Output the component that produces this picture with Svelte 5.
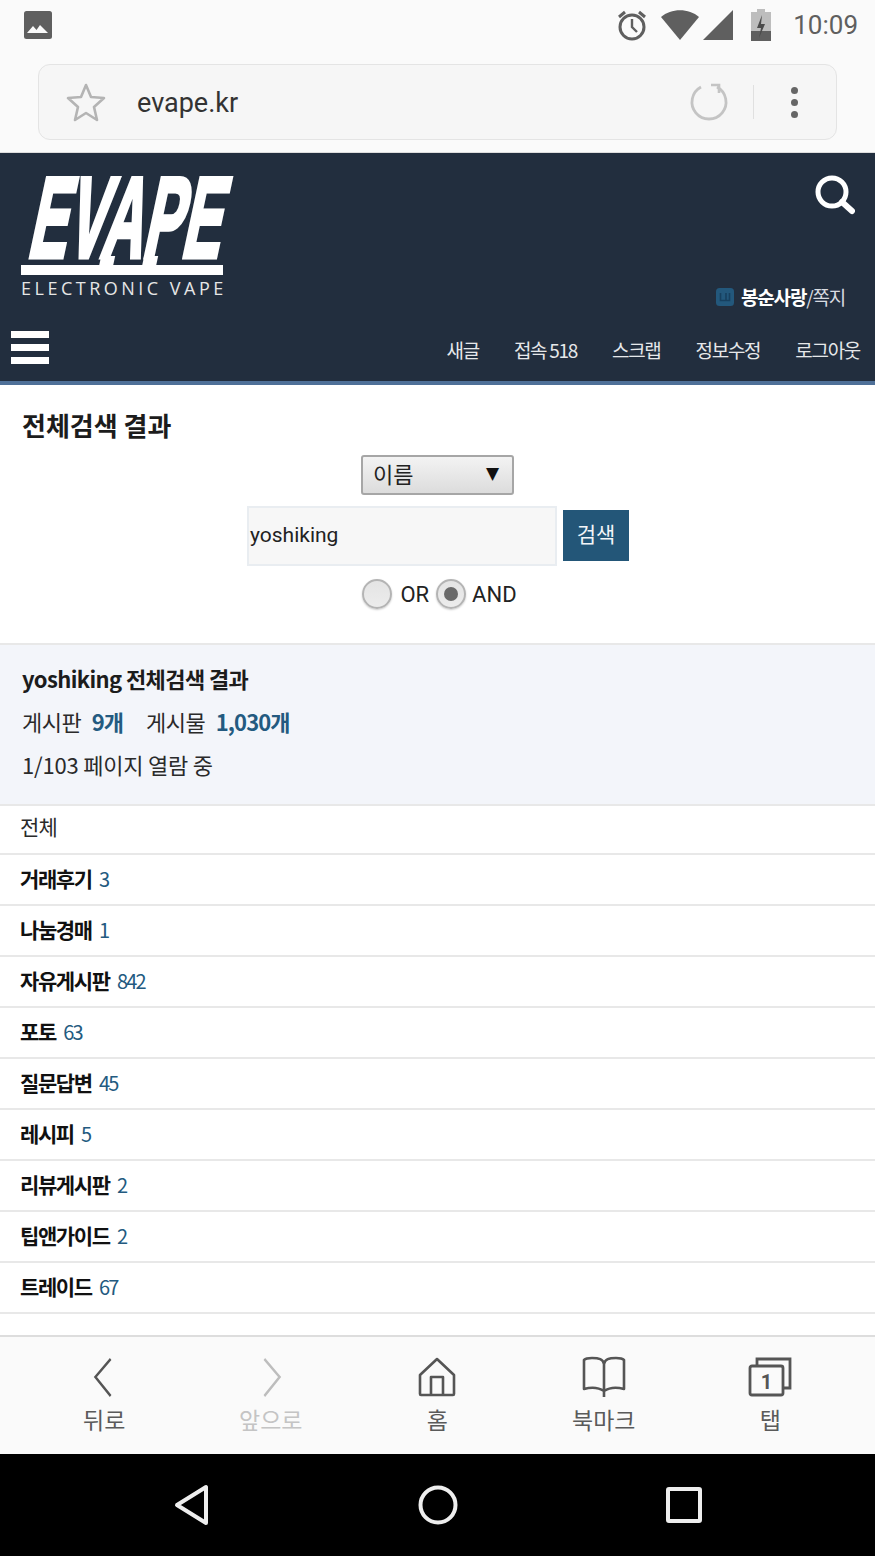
<script>
  const boards = [
    ['거래후기', 3], ['나눔경매', 1], ['자유게시판', 842], ['포토', 63], ['질문답변', 45],
    ['레시피', 5], ['리뷰게시판', 2], ['팁앤가이드', 2], ['트레이드', 67]
  ];
  const topLinks = ['새글', '접속 518', '스크랩', '정보수정', '로그아웃'];
</script>

<div class="phone">
  <div class="status">
    <svg class="pic" viewBox="0 0 28 28"><rect width="28" height="28" rx="2.5" fill="#5f5f5f"/><path d="M3 22l6-7 3.5 4 3.5-5 8 8z" fill="#fafafa"/></svg>
    <div class="status-right">
      <svg class="alarm" viewBox="0 0 32 32" fill="none" stroke="#5f5f5f"><circle cx="16" cy="18" r="12" stroke-width="3"/><path d="M16 10v8l5 5" stroke-width="2.4"/><path d="M3 8l6-5M29 8l-6-5" stroke-width="3"/></svg>
      <svg class="wifi" viewBox="0 0 38 30"><path d="M0 7C10-2 28-2 38 7L19 30z" fill="#5f5f5f"/></svg>
      <svg class="signal" viewBox="0 0 32 32"><path d="M0 32L32 0v32z" fill="#5f5f5f"/></svg>
      <svg class="battery" viewBox="0 0 20 32"><path d="M6 0h8v3h6v29H0V3h6z" fill="#bdbdbd"/><path d="M0 22h20v10H0z" fill="#5f5f5f"/><path d="M11 6l-5 13h4l-2 10 6-14h-4z" fill="#4b4b4b"/></svg>
      <span class="time">10:09</span>
    </div>
  </div>

  <div class="urlwrap">
    <div class="urlbar">
      <svg class="star" viewBox="0 0 40 40" fill="none" stroke="#b4b4b4" stroke-width="2.6" stroke-linejoin="round"><path d="M20 3l5 12 13 1-10 9 3 13-11-7-11 7 3-13L2 16l13-1z"/></svg>
      <span class="url">evape.kr</span>
      <svg class="reload" viewBox="0 0 40 40" fill="none" stroke="#c4c4c4" stroke-width="2.8"><path d="M12 5a17 17 0 1 0 16 0"/><path d="M22 3h8v8" stroke-width="2.6"/></svg>
      <span class="sep"></span>
      <span class="dots"><i></i><i></i><i></i></span>
    </div>
  </div>

  <header class="head">
    <div class="head-top">
      <div class="logo">
        <span class="evape">EVAPE</span>
        <span class="leg leg1"></span>
        <span class="leg leg2"></span>
        <span class="logobar"></span>
        <span class="sub">ELECTRONIC VAPE</span>
      </div>
      <svg class="search" viewBox="0 0 40 40" fill="none" stroke="#fff"><circle cx="17" cy="17" r="14" stroke-width="5"/><path d="M27 27l10 9" stroke-width="6" stroke-linecap="round"/></svg>
    </div>
    <div class="user">
      <svg class="lv" viewBox="0 0 18 18"><rect width="18" height="18" rx="3.5" fill="#23587c"/><path d="M4.5 5v7.5h9V5M10 5v7" fill="none" stroke="#17405f" stroke-width="1.6"/></svg>
      <b>봉순사랑</b><span>/쪽지</span>
    </div>
    <div class="head-nav">
      <span class="burger"><i></i><i></i><i></i></span>
      <nav>
        {#each topLinks as l}<span>{l}</span>{/each}
      </nav>
    </div>
  </header>

  <main class="content">
    <section class="form">
      <h1>전체검색 결과</h1>
      <div class="select"><span>이름</span><em>▼</em></div>
      <div class="input-row">
        <div class="input">yoshiking</div>
        <div class="btn">검색</div>
      </div>
      <div class="radios">
        <span class="radio"></span><span class="lab">OR</span>
        <span class="radio on"><i></i></span><span class="lab and">AND</span>
      </div>
    </section>

    <section class="summary">
      <h2>yoshiking 전체검색 결과</h2>
      <p class="counts">게시판 <b>9개</b><span class="gap"></span>게시물 <b>1,030개</b></p>
      <p class="pages">1/103 페이지 열람 중</p>
    </section>

    <ul class="list">
      <li class="all">전체</li>
      {#each boards as [name, n]}
        <li><b>{name}</b> <span>{n}</span></li>
      {/each}
    </ul>
  </main>

  <div class="bottom">
    <div class="tab">
      <svg viewBox="0 0 40 40" fill="none" stroke="#555" stroke-width="2.6"><path d="M29 2L11 20l18 19" transform="translate(2 0) scale(.85 1)"/></svg>
      <span>뒤로</span>
    </div>
    <div class="tab off">
      <svg viewBox="0 0 40 40" fill="none" stroke="#bdbdbd" stroke-width="2.6"><path d="M11 2l18 18-18 19" transform="translate(4 0) scale(.85 1)"/></svg>
      <span>앞으로</span>
    </div>
    <div class="tab">
      <svg viewBox="0 0 40 40" fill="none" stroke="#555" stroke-width="2.6" stroke-linejoin="round"><path d="M20 2L3 18v19a1 1 0 0 0 1 1h32a1 1 0 0 0 1-1V18zM14 38V20h12v18"/></svg>
      <span>홈</span>
    </div>
    <div class="tab">
      <svg class="wide" viewBox="0 0 44 40" fill="none" stroke="#555" stroke-width="2.6" stroke-linejoin="round"><path d="M22 7C21 2 17 1 10 1 6 1 3 2 2 3v29c7-2 14-2 20 2 6-4 13-4 20-2V3c-1-1-4-2-8-2-7 0-11 1-12 6zM22 7v33"/></svg>
      <span>북마크</span>
    </div>
    <div class="tab">
      <svg class="wide" viewBox="0 0 44 40" fill="none" stroke="#555" stroke-width="2.8"><path d="M9 8V2h33v29h-7"/><rect x="2" y="9" width="33" height="29" rx="2"/><text x="18.5" y="32" text-anchor="middle" class="one">1</text></svg>
      <span>탭</span>
    </div>
  </div>

  <div class="android">
    <svg class="n1" viewBox="0 0 36 42" fill="none" stroke="#eee" stroke-width="4" stroke-linejoin="round"><path d="M32 3v36L3 21z"/></svg>
    <svg class="n2" viewBox="0 0 40 40" fill="none" stroke="#eee" stroke-width="4"><circle cx="20" cy="20" r="17.5"/></svg>
    <svg class="n3" viewBox="0 0 36 36" fill="none" stroke="#eee" stroke-width="4" stroke-linejoin="round"><rect x="2" y="2" width="32" height="32" rx="1"/></svg>
  </div>
</div>

<style>
  :global(body) { margin: 0; background: #fff; }
  .phone {
    width: 875px; height: 1556px; display: flex; flex-direction: column; overflow: hidden;
    font-family: "Noto Sans CJK KR", "Noto Sans", sans-serif; color: #222;
  }
  .status { height: 52px; background: #fafafa; display: flex; justify-content: space-between; align-items: center; padding: 0 17px 0 24px; box-sizing: border-box; flex: none; }
  .pic { width: 28px; height: 28px; margin-top: -2px; }
  .status-right { display: flex; align-items: center; margin-top: -2px; }
  .alarm { width: 32px; height: 32px; margin-right: 13px; }
  .wifi { width: 38px; height: 30px; margin-right: 4px; margin-top: 0; }
  .signal { width: 30px; height: 30px; margin-right: 18px; }
  .battery { width: 20px; height: 32px; margin-right: 22px; }
  .time { font: 400 26px Roboto, sans-serif; color: #5f5f5f; }

  .urlwrap { height: 101px; background: #fafafa; padding: 12px 38px 12px; box-sizing: border-box; flex: none; border-bottom: 1px solid #ddd; }
  .urlbar { height: 76px; box-sizing: border-box; background: #f6f6f6; border: 1px solid #e4e4e4; border-radius: 12px; display: flex; align-items: center; padding: 0 38px 0 27px; }
  .star { width: 40px; height: 40px; flex: none; }
  .url { font: 400 27px Roboto, sans-serif; color: #333; margin-left: 31px; flex: 1; padding-top: 2px; }
  .reload { width: 40px; height: 40px; flex: none; margin-right: 24px; }
  .sep { width: 1px; height: 34px; background: #e0e0e0; margin-right: 37px; }
  .dots { display: flex; flex-direction: column; gap: 5px; }
  .dots i { width: 7px; height: 7px; border-radius: 50%; background: #666; }

  .head { background: #222e3e; height: 232px; box-sizing: border-box; border-bottom: 4px solid #4f7098; flex: none; padding-top: 23px; position: relative; }
  .head-top { display: flex; justify-content: space-between; padding: 0 20px 0 21px; align-items: flex-start; }
  .logo { width: 212px; position: relative; height: 122px; }
  .evape {
    position: absolute; left: 28px; top: -26px; transform-origin: left top; transform: skewX(-12deg) scale(.69, 1.36);
    font: 700 84px/100px "Liberation Sans", sans-serif; color: #fff; letter-spacing: 0; -webkit-text-stroke: 3.5px #fff; white-space: nowrap;
  }
  .leg { position: absolute; top: 80px; height: 11px; background: #fff; transform: skewX(-12deg); }
  .leg1 { left: 79px; width: 14px; }
  .leg2 { left: 122px; width: 14px; }
  .logobar { position: absolute; left: 0; top: 89px; width: 202px; height: 10px; background: #fff; }
  .sub { position: absolute; left: 0; top: 101px; font: 400 18px/22px "Open Sans", sans-serif; color: #e6e6e6; letter-spacing: 3.5px; white-space: nowrap; }
  .search { width: 40px; height: 40px; margin-top: -1px; }
  .user { display: flex; align-items: center; justify-content: flex-end; margin-top: -15px; padding-right: 30px; font-size: 19px; letter-spacing: -1.2px; color: #d8dbe0; line-height: 28px; }
  .lv { width: 18px; height: 18px; margin-right: 7px; }
  .user b { color: #fff; font-weight: 700; }
  .head-nav { display: flex; align-items: center; justify-content: space-between; padding: 0 15px 0 11px; margin-top: 18px; }
  .burger { display: flex; flex-direction: column; gap: 6px; }
  .burger i { display: block; width: 38px; height: 7px; background: #fff; }
  nav { display: flex; gap: 35px; font-size: 19px; letter-spacing: -1.3px; color: #e6e8ea; line-height: 30px; white-space: nowrap; margin-top: 6px; font-weight: 400; }

  .content { flex: 1; min-height: 0; overflow: hidden; background: #fff; }
  .form { height: 258px; box-sizing: border-box; padding-top: 22px; display: flex; flex-direction: column; align-items: center; }
  h1 { align-self: flex-start; margin: 0 0 0 22px; font-size: 26px; line-height: 36px; font-weight: 700; color: #1c1c1c; letter-spacing: 0; }
  .select { width: 153px; height: 40px; box-sizing: border-box; margin-top: 12px; border: 2px solid #a6a6a6; border-radius: 3px; background: linear-gradient(#f3f3f3, #dcdcdc); display: flex; justify-content: space-between; align-items: center; padding: 0 13px 4px 10px; font: 400 22px Roboto, "Noto Sans CJK KR", sans-serif; color: #222; }
  .select em { font-style: normal; font-size: 17px; color: #111; font-family: "DejaVu Sans", sans-serif; }
  .input-row { display: flex; align-items: flex-start; margin-top: 11px; margin-left: 1px; gap: 6px; }
  .input { width: 310px; height: 60px; box-sizing: border-box; border: 2px solid #e9edf1; background: #f7f7f7; font: 400 21px/54px Roboto, sans-serif; padding-left: 1px; color: #222; }
  .btn { width: 66px; height: 51px; margin-top: 4px; background: #235678; color: #f2f5f8; font-size: 21px; line-height: 46px; text-align: center; }
  .radios { display: flex; align-items: center; margin-top: 13px; font: 400 22px Roboto, sans-serif; color: #222; margin-left: 4px; }
  .lab { margin: 0 7px 0 8px; }
  .lab.and { margin: 0 0 0 6px; }
  .radio { width: 30px; height: 30px; box-sizing: border-box; border-radius: 50%; border: 2px solid #b4b4b4; background: linear-gradient(#e4e4e4, #ececec); box-shadow: 0 1px 2px #ccc; display: flex; align-items: center; justify-content: center; }
  .radio i { width: 14px; height: 14px; border-radius: 50%; background: #6a6a6a; }

  .summary { height: 163px; box-sizing: border-box; background: #f3f5fa; border-top: 2px solid #e8e8e8; border-bottom: 2px solid #e8e8e8; padding: 15px 22px 0; }
  h2 { margin: 0; font-size: 22px; line-height: 36px; font-weight: 700; color: #1c1c1c; letter-spacing: -.6px; }
  .summary p { margin: 0; font-size: 22px; color: #2a2a2a; }
  .counts { margin-top: 6px !important; line-height: 38px; letter-spacing: -.5px; }
  .counts b { color: #235a80; font-weight: 700; margin-left: 6px; letter-spacing: -.9px; }
  .gap { display: inline-block; width: 23px; }
  .pages { margin-top: 5px !important; line-height: 38px; letter-spacing: -.2px; }

  .list { list-style: none; margin: 0; padding: 0; }
  .list li { height: 51px; box-sizing: border-box; border-bottom: 2px solid #e8e8e8; padding-left: 20px; font-size: 21px; line-height: 47px; letter-spacing: -1.4px; color: #111; white-space: nowrap; }
  .list li.all { height: 49px; line-height: 41px; font-size: 21px; color: #2a2a2a; letter-spacing: -.7px; }
  .list b { font-weight: 700; }
  .list span { color: #235a80; font-weight: 400; margin-left: 4px; font-size: 20px; letter-spacing: -1.8px; }

  .bottom { height: 119px; flex: none; background: #fafafa; border-top: 2px solid #ddd; box-sizing: border-box; display: grid; grid-template-columns: repeat(5, 166.5px); padding-left: 21px; }
  .tab { display: flex; flex-direction: column; align-items: center; padding-top: 20px; font-size: 23px; color: #5a5a5a; line-height: 32px; }
  .tab svg { width: 40px; height: 40px; overflow: visible; }
  .tab svg.wide { width: 44px; }
  .tab span { margin-top: 6px; letter-spacing: 0; }
  .tab.off { color: #c4c4c4; }
  .one { font: 700 20px Roboto, sans-serif; fill: #555; stroke: none; }

  .android { height: 102px; flex: none; background: #000; display: grid; grid-template-columns: 192px 246px 246px; align-items: center; }
  .android svg { justify-self: end; transform: translateX(50%); }
  .n1 { width: 36px; height: 42px; }
  .n2 { width: 40px; height: 40px; }
  .n3 { width: 36px; height: 36px; }
</style>
